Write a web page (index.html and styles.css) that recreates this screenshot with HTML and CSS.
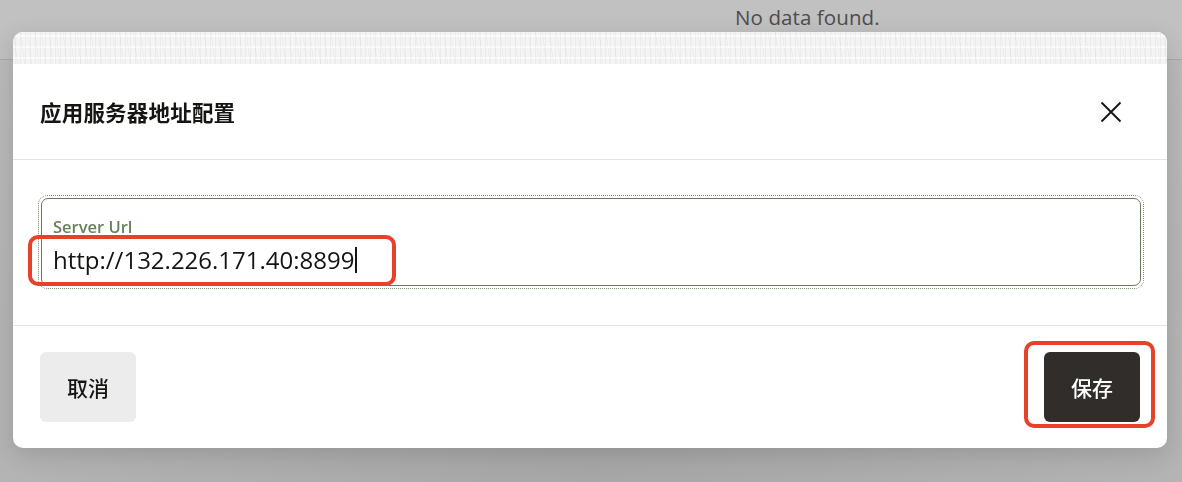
FILE: index.html
```html
<!DOCTYPE html>
<html lang="zh">
<head>
<meta charset="utf-8">
<title>应用服务器地址配置</title>
<link rel="stylesheet" href="styles.css">
</head>
<body>
<div class="page">
  <div class="topbar">
    <div class="nodata">No data found.</div>
  </div>
  <div class="rest"></div>
</div>

<div class="overlay">
  <div class="dialog">
    <div class="texture"></div>
    <div class="header">
      <h1 class="title">应用服务器地址配置</h1>
      <button class="close" aria-label="关闭">
        <svg width="22" height="22" viewBox="0 0 22 22"><path d="M1.5 1.5 L20.5 20.5 M20.5 1.5 L1.5 20.5" stroke="#161513" stroke-width="1.9" fill="none" stroke-linecap="butt"/></svg>
      </button>
    </div>
    <div class="body">
      <div class="field-ring">
        <div class="field">
          <div class="label">Server Url</div>
          <div class="value">http://132.226.171.40:8899<span class="caret"></span></div>
        </div>
      </div>
      <div class="mark mark-url"></div>
    </div>
    <div class="footer">
      <button class="btn btn-cancel">取消</button>
      <div class="save-wrap">
        <button class="btn btn-save">保存</button>
        <div class="mark mark-save"></div>
      </div>
    </div>
  </div>
</div>
</body>
</html>
```

FILE: styles.css
```css
* { box-sizing: border-box; }
html, body { margin: 0; padding: 0; }
body {
  width: 1182px;
  height: 482px;
  overflow: hidden;
  font-family: "Open Sans", "Noto Sans CJK SC", sans-serif;
  background: #b4b4b4;
}
.page {
  height: 482px;
  display: flex;
  flex-direction: column;
}
.topbar {
  height: 60px;
  background: #c1c1c1;
  border-bottom: 1px solid #a9a9a9;
  padding-left: 735px;
}
.nodata {
  padding-top: 3px;
  font-size: 20.5px;
  color: #4d4d4d;
  letter-spacing: 0.1px;
}
.rest {
  flex: 1;
  background: radial-gradient(ellipse at 50% 100%, #a6a6a6 0%, #afafaf 50%, #bababa 100%);
}

.overlay {
  position: fixed;
  inset: 0;
  padding: 32px 15px 0 13px;
}
.dialog {
  width: 1154px;
  height: 416px;
  background: #ffffff;
  border-radius: 10px;
  overflow: hidden;
  display: flex;
  flex-direction: column;
  box-shadow: 0 6px 24px rgba(0,0,0,0.14);
  font-family: "Noto Sans CJK SC", "Open Sans", sans-serif;
  color: #161513;
}
.texture {
  height: 32px;
  background-color: #f4f4f4;
  background-image:
    repeating-linear-gradient(90deg, rgba(0,0,0,0) 0 2px, rgba(0,0,0,0.035) 2px 3px, rgba(0,0,0,0) 3px 5px),
    repeating-linear-gradient(0deg, rgba(255,255,255,0.0) 0 5px, rgba(255,255,255,0.6) 5px 7px, rgba(255,255,255,0) 7px 11px),
    repeating-linear-gradient(83deg, rgba(0,0,0,0) 0 4px, rgba(0,0,0,0.03) 4px 5px, rgba(0,0,0,0) 5px 7px);
}
.header {
  height: 96px;
  border-bottom: 1px solid #e4e4e4;
  display: flex;
  align-items: center;
  justify-content: space-between;
  padding: 0 45px 0 27px;
}
.title {
  margin: 0;
  font-size: 21.5px;
  font-weight: 700;
  letter-spacing: 0.2px;
  color: #161513;
}
.close {
  width: 22px;
  height: 22px;
  padding: 0;
  border: 0;
  background: none;
  display: flex;
  align-items: center;
  justify-content: center;
}
.close svg { display: block; }

.body {
  position: relative;
  height: 166px;
  border-bottom: 1px solid #e4e4e4;
  padding: 35px 23px 0 25px;
}
.field-ring {
  height: 94px;
  border: 1px dotted #7d8b6e;
  border-radius: 9px;
  padding: 2px;
}
.field {
  height: 100%;
  border: 1.5px solid #6b7a5c;
  border-radius: 7px;
  padding: 17px 12px 0 11px;
}
.label {
  font-family: "Open Sans", sans-serif;
  font-weight: 600;
  font-size: 16.5px;
  line-height: 22px;
  color: #67825b;
}
.value {
  font-family: "Open Sans", sans-serif;
  font-size: 24px;
  line-height: 32px;
  margin-top: 6px;
  color: #161513;
  display: flex;
  align-items: center;
}
.caret {
  display: inline-block;
  width: 1.5px;
  height: 26px;
  background: #161513;
  margin-left: 1px;
}
.mark {
  position: absolute;
  border: 4px solid #e8412b;
  border-radius: 10px;
}
.mark-url {
  left: 15px;
  top: 75px;
  width: 368px;
  height: 51px;
}

.footer {
  flex: 1;
  display: flex;
  justify-content: space-between;
  align-items: flex-start;
  padding: 26px 27px 0 27px;
}
.btn {
  width: 96px;
  height: 70px;
  border: 0;
  border-radius: 6px;
  font-family: "Noto Sans CJK SC", sans-serif;
  font-size: 21px;
  font-weight: 500;
  padding: 0;
  cursor: pointer;
}
.btn-cancel {
  background: #ececec;
  color: #161513;
}
.save-wrap {
  position: relative;
}
.btn-save {
  background: #312d2a;
  color: #ffffff;
  display: block;
}
.mark-save {
  left: -20px;
  top: -11px;
  width: 131px;
  height: 87px;
}
```
